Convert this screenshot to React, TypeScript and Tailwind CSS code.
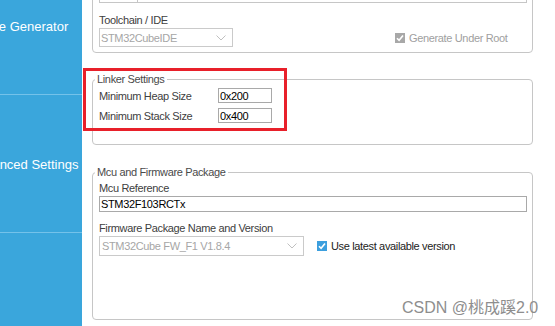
import React from "react";

const Chevron = () => (
  <svg width="10" height="6" viewBox="0 0 10 6" fill="none">
    <polyline points="0.5,0.5 5,5 9.5,0.5" stroke="#c0c0c0" strokeWidth="1" />
  </svg>
);

const Check = ({ bg }: { bg: string }) => (
  <span className={`flex h-[10px] w-[10px] items-center justify-center ${bg}`}>
    <svg width="8" height="8" viewBox="0 0 8 8" fill="none">
      <polyline points="1,4.2 3.1,6.3 7,1.6" stroke="#ffffff" strokeWidth="1.6" />
    </svg>
  </span>
);

export default function App() {
  return (
    <div className="relative flex h-[326px] w-[555px] overflow-hidden bg-white font-['Liberation_Sans',Arial,sans-serif] text-[11px] leading-[14px] tracking-[-0.35px] text-[#404040]">
      <aside className="flex w-[82px] shrink-0 flex-col overflow-hidden bg-[#3aa6dc] text-[13px] leading-[16px] tracking-normal text-white">
        <div className="h-[95px] border-b border-[#74c2ea] pt-[19px]">
          <div className="ml-[-25px] whitespace-nowrap">Code Generator</div>
        </div>
        <div className="h-[138px] border-b border-[#74c2ea] pt-[62px]">
          <div className="ml-[-30px] whitespace-nowrap">Advanced Settings</div>
        </div>
        <div className="flex-1" />
      </aside>

      <main className="flex-1 pl-[10px]">
        <div className="w-[441px]">
          <div className="mt-[-30px] rounded-[4px] border border-[#c6c6c6] pb-[5px] pl-[6px] pr-[5px] pt-[9px]">
            <div className="flex h-[23px] border border-[#c6c6c6]">
              <div className="w-[38px] border-r border-[#c6c6c6]" />
              <div className="flex-1" />
            </div>
            <div className="mt-[10px]">Toolchain / IDE</div>
            <div className="mt-[1px] flex items-center">
              <div className="flex h-[19px] w-[134px] items-center justify-between border border-[#cacaca] pl-[1px] pr-[6px] text-[#a6a6a6]">
                <span>STM32CubeIDE</span>
                <Chevron />
              </div>
              <div className="ml-[162px] flex items-center">
                <Check bg="bg-[#a8a8a8]" />
                <span className="ml-[4px] text-[#a0a0a0]">Generate Under Root</span>
              </div>
            </div>
          </div>

          <fieldset className="mt-[19px] rounded-[4px] border border-[#c6c6c6] pb-[21px] pl-[6px] pr-[5px]">
            <legend className="ml-[-4px] px-[2px] leading-[14px] text-[#4a4a4a]">Linker Settings</legend>
            <div className="mt-[2px] flex h-[15px] items-center">
              <span className="w-[119px]">Minimum Heap Size</span>
              <div className="flex h-[15px] w-[54px] items-center border border-[#a9a9a9] pl-[1px] text-black">0x200</div>
            </div>
            <div className="mt-[5px] flex h-[15px] items-center">
              <span className="w-[119px]">Minimum Stack Size</span>
              <div className="flex h-[15px] w-[54px] items-center border border-[#a9a9a9] pl-[1px] text-black">0x400</div>
            </div>
          </fieldset>

          <fieldset className="mt-[20px] rounded-[4px] border border-[#c6c6c6] pb-[63px] pl-[6px] pr-[5px]">
            <legend className="ml-[-4px] px-[2px] leading-[14px] text-[#4a4a4a]">Mcu and Firmware Package</legend>
            <div className="mt-[2px]">Mcu Reference</div>
            <div className="mt-[1px] flex h-[16px] items-center border border-[#a9a9a9] pl-[1px] text-black">STM32F103RCTx</div>
            <div className="mt-[9px]">Firmware Package Name and Version</div>
            <div className="mt-[1px] flex items-center">
              <div className="flex h-[20px] w-[205px] items-center justify-between border border-[#cacaca] pl-[2px] pr-[6px] text-[#a6a6a6]">
                <span>STM32Cube FW_F1 V1.8.4</span>
                <Chevron />
              </div>
              <div className="ml-[13px] flex items-center">
                <Check bg="bg-[#3c9fde]" />
                <span className="ml-[4px] text-[#222222]">Use latest available version</span>
              </div>
            </div>
          </fieldset>
        </div>
      </main>

      <div className="pointer-events-none absolute left-[83px] top-[68px] h-[63px] w-[204px] border-[3px] border-[#e8202a]" />

      <div className="pointer-events-none absolute left-[402px] top-[298px] whitespace-nowrap font-['Liberation_Sans','Noto_Sans_CJK_SC',sans-serif] text-[16px] leading-[20px] tracking-normal text-[#8e8e8e]">
        CSDN @桃成蹊2.0
      </div>
    </div>
  );
}
